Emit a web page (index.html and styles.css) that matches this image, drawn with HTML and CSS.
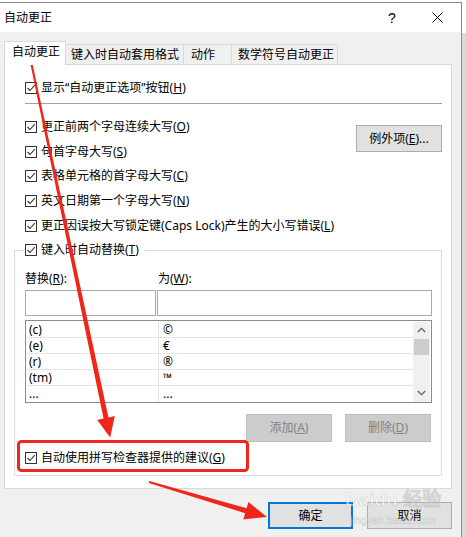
FILE: index.html
```html
<!DOCTYPE html>
<html lang="zh-CN">
<head>
<meta charset="utf-8">
<title>自动更正</title>
<link rel="stylesheet" href="styles.css">
</head>
<body>
<div class="window">
  <div class="titlebar">
    <span class="title">自动更正</span>
    <span class="help">?</span>
    <span class="close"><svg width="11" height="11" viewBox="0 0 11 11"><path d="M0.5 0.5L10.5 10.5M10.5 0.5L0.5 10.5" stroke="#000" stroke-width="1" fill="none"/></svg></span>
  </div>
  <div class="client">
    <div class="tabs">
      <div class="tab active">自动更正</div>
      <div class="tab t2">键入时自动套用格式</div>
      <div class="tab t3">动作</div>
      <div class="tab t4">数学符号自动更正</div>
    </div>
    <div class="panel">
      <div class="cb"><span class="box"><svg width="10" height="10" viewBox="0 0 10 10"><path d="M1.5 5L4 7.5L8.8 2.2" stroke="#333" stroke-width="1.1" fill="none"/></svg></span>显示“自动更正选项”按钮(<u>H</u>)</div>
      <div class="sep"></div>
      <div class="opts">
        <div class="optlist">
          <div class="cb"><span class="box"><svg width="10" height="10" viewBox="0 0 10 10"><path d="M1.5 5L4 7.5L8.8 2.2" stroke="#333" stroke-width="1.1" fill="none"/></svg></span>更正前两个字母连续大写(<u>O</u>)</div>
          <div class="cb"><span class="box"><svg width="10" height="10" viewBox="0 0 10 10"><path d="M1.5 5L4 7.5L8.8 2.2" stroke="#333" stroke-width="1.1" fill="none"/></svg></span>句首字母大写(<u>S</u>)</div>
          <div class="cb"><span class="box"><svg width="10" height="10" viewBox="0 0 10 10"><path d="M1.5 5L4 7.5L8.8 2.2" stroke="#333" stroke-width="1.1" fill="none"/></svg></span>表格单元格的首字母大写(<u>C</u>)</div>
          <div class="cb"><span class="box"><svg width="10" height="10" viewBox="0 0 10 10"><path d="M1.5 5L4 7.5L8.8 2.2" stroke="#333" stroke-width="1.1" fill="none"/></svg></span>英文日期第一个字母大写(<u>N</u>)</div>
          <div class="cb"><span class="box"><svg width="10" height="10" viewBox="0 0 10 10"><path d="M1.5 5L4 7.5L8.8 2.2" stroke="#333" stroke-width="1.1" fill="none"/></svg></span>更正因误按大写锁定键(Caps Lock)产生的大小写错误(<u>L</u>)</div>
        </div>
        <button class="btn exc">例外项(<u>E</u>)...</button>
      </div>
      <div class="group">
        <div class="cb legend"><span class="box"><svg width="10" height="10" viewBox="0 0 10 10"><path d="M1.5 5L4 7.5L8.8 2.2" stroke="#333" stroke-width="1.1" fill="none"/></svg></span>键入时自动替换(<u>T</u>)</div>
        <div class="fields">
          <span class="flabel">替换(<u>R</u>):</span>
          <span class="flabel right">为(<u>W</u>):</span>
          <div class="input left"></div>
          <div class="input"></div>
        </div>
        <div class="list">
          <div class="rows">
            <div class="row"><span class="c1">(c)</span><span class="c2">©</span></div>
            <div class="row"><span class="c1">(e)</span><span class="c2">€</span></div>
            <div class="row"><span class="c1">(r)</span><span class="c2">®</span></div>
            <div class="row"><span class="c1">(tm)</span><span class="c2">™</span></div>
            <div class="row last"><span class="c1">...</span><span class="c2">...</span></div>
          </div>
          <div class="vscroll">
            <span class="arrow"><svg width="9" height="6" viewBox="0 0 9 6"><path d="M0.8 5L4.5 1.3L8.2 5" stroke="#606060" stroke-width="1.3" fill="none"/></svg></span>
            <span class="thumb"></span>
            <span class="track"></span>
            <span class="arrow"><svg width="9" height="6" viewBox="0 0 9 6"><path d="M0.8 1L4.5 4.7L8.2 1" stroke="#606060" stroke-width="1.3" fill="none"/></svg></span>
          </div>
        </div>
        <div class="listbtns">
          <button class="btn dis" disabled>添加(<u>A</u>)</button>
          <button class="btn dis" disabled>删除(<u>D</u>)</button>
        </div>
        <div class="cb spell"><span class="box"><svg width="10" height="10" viewBox="0 0 10 10"><path d="M1.5 5L4 7.5L8.8 2.2" stroke="#333" stroke-width="1.1" fill="none"/></svg></span>自动使用拼写检查器提供的建议(<u>G</u>)</div>
      </div>
    </div>
    <div class="footer">
      <button class="btn ok">确定</button>
      <button class="btn cancel">取消</button>
    </div>
  </div>
</div>
<div class="watermark"><span class="wm-big">Baidu 经验</span><span class="wm-small">jingyan.baidu.com</span></div>
<svg class="annot" width="466" height="537" viewBox="0 0 466 537">
  <polygon fill="#f0261a" points="30.98,56.79 108.45,417.48 114.8,416.1 110.2,437.5 97.2,419.9 103.55,418.52 29.02,57.21"/>
  <polygon fill="#f0261a" points="148.72,482.96 245.19,513.15 243.34,519.38 267,517 248.46,502.12 246.61,508.35 149.28,481.04"/>
  <rect x="18.5" y="441.5" width="229" height="29" rx="3" ry="3" fill="none" stroke="#f0261a" stroke-width="3"/>
</svg>
</body>
</html>
```
FILE: styles.css
```css
* { box-sizing: border-box; }
html, body { margin: 0; padding: 0; }
body {
  width: 466px;
  height: 537px;
  overflow: hidden;
  position: relative;
  background: linear-gradient(#ffffff 0 33px, #dadada 33px);
  font-family: "Noto Sans", "Noto Sans CJK SC", sans-serif;
  font-size: 12px;
  color: #000;
}
u { text-decoration: underline; text-underline-offset: 1px; }

.window {
  width: 462px;
  height: 535px;
  margin-top: 2px;
  border-top: 1px solid #8a8a8a;
  border-right: 1px solid #8a8a8a;
  background: #f0f0f0;
  display: flex;
  flex-direction: column;
}
.titlebar {
  height: 29px;
  flex: none;
  background: #fff;
  display: flex;
  align-items: center;
  padding-left: 4px;
  padding-right: 18px;
}
.title { flex: 1; line-height: 16px; }
.help {
  width: 12px;
  margin-right: 34px;
  text-align: center;
  font-family: "Liberation Sans", sans-serif;
  font-size: 14px;
  line-height: 16px;
}
.close { width: 11px; height: 11px; display: flex; }

.client { flex: 1; display: flex; flex-direction: column; }

.tabs {
  margin-top: 9px;
  height: 24px;
  display: flex;
  align-items: flex-end;
  padding-left: 4px;
}
.tab {
  height: 21px;
  border: 1px solid #d9d9d9;
  border-bottom: none;
  border-left: none;
  background: #f0f0f0;
  line-height: 19px;
  white-space: nowrap;
}
.tab.active {
  position: relative;
  z-index: 1;
  height: 24px;
  width: 62px;
  border-left: 1px solid #d9d9d9;
  background: #fff;
  line-height: 20px;
  padding-left: 7px;
}
.tab.t2 { width: 118px; padding-left: 5px; }
.tab.t3 { width: 48px; padding-left: 7px; }
.tab.t4 { width: 106px; padding-left: 6px; }

.panel {
  margin-top: -1px;
  margin-left: 4px;
  width: 448px;
  height: 425px;
  flex: none;
  border: 1px solid #d9d9d9;
  background: #fff;
  padding: 11px 9px 0 20px;
  display: flex;
  flex-direction: column;
}

.cb {
  display: flex;
  align-items: center;
  height: 24px;
  white-space: nowrap;
  line-height: 16px;
  flex: none;
}
.box {
  width: 12px;
  height: 12px;
  flex: none;
  border: 1px solid #333;
  background: #fff;
  margin-right: 4px;
  display: flex;
  align-items: center;
  justify-content: center;
}

.sep { margin-top: 3px; height: 1px; background: #a0a0a0; flex: none; }

.opts {
  margin-top: 11px;
  display: flex;
  justify-content: space-between;
  align-items: flex-start;
}
.optlist { display: flex; flex-direction: column; }
.optlist .cb { height: 24.6px; }

.btn {
  font: inherit;
  color: #000;
  background: #e1e1e1;
  border: 1px solid #adadad;
  padding: 0;
  margin: 0;
  line-height: 16px;
  display: flex;
  align-items: center;
  justify-content: center;
}
.btn.exc { width: 86px; height: 27px; margin-top: 10px; }

.group {
  margin-top: 12px;
  margin-left: -11px;
  width: 428px;
  border: 1px solid #dcdcdc;
  padding: 0 9px 5px 10px;
  display: flex;
  flex-direction: column;
}
.legend {
  margin-top: -13px;
  margin-left: -2px;
  padding: 0 6px 0 2px;
  background: #fff;
  align-self: flex-start;
}

.fields {
  margin-top: 9px;
  display: grid;
  grid-template-columns: 132px 275px;
  row-gap: 3px;
}
.flabel { line-height: 16px; height: 16px; }
.flabel.right { padding-left: 1px; }
.input { height: 26px; border: 1px solid #a9a9a9; background: #fff; }
.input.left { width: 131px; }

.list {
  margin-top: 4px;
  width: 407px;
  height: 83px;
  border: 1px solid #8a8a8a;
  padding: 1px 1px 0 1px;
  display: flex;
}
.rows { flex: 1; display: flex; flex-direction: column; }
.row {
  height: 16px;
  display: grid;
  grid-template-columns: 132px 1fr;
  border-bottom: 1px solid #e3e3e3;
  line-height: 15px;
  overflow: hidden;
}
.row.last { border-bottom: none; }
.c1 { border-right: 1px solid #e3e3e3; padding-left: 2px; }
.c2 { padding-left: 4px; }

.vscroll {
  width: 17px;
  height: 80px;
  background: #f0f0f0;
  display: flex;
  flex-direction: column;
  align-items: center;
}
.arrow { height: 17px; flex: none; display: flex; align-items: center; justify-content: center; }
.thumb { width: 15px; height: 16px; background: #cdcdcd; flex: none; }
.track { flex: 1; }

.listbtns {
  margin-top: 11px;
  display: flex;
  justify-content: flex-end;
  gap: 13px;
  padding-right: 1px;
}
.btn.dis {
  width: 86px;
  height: 28px;
  background: #cccccc;
  border-color: #bfbfbf;
  color: #838383;
}
.spell { margin-top: 4px; }

.footer {
  margin-top: 13px;
  display: flex;
  justify-content: flex-end;
  gap: 14px;
  padding-right: 9px;
}
.footer .btn { width: 85px; height: 27px; }
.btn.ok { border: 2px solid #0078d7; }

.watermark {
  position: absolute;
  left: 347px;
  top: 489px;
  width: 92px;
  display: flex;
  flex-direction: column;
  align-items: center;
  font-family: "Liberation Sans", sans-serif;
  color: rgba(255, 255, 255, 0.5);
  -webkit-text-stroke: 0.5px rgba(150, 150, 150, 0.4);
  pointer-events: none;
}
.wm-big { font-size: 19px; font-weight: bold; line-height: 22px; white-space: nowrap; }
.wm-small { font-size: 10px; line-height: 12px; letter-spacing: 0.3px; margin-top: 4px; }

.annot { position: absolute; left: 0; top: 0; pointer-events: none; }
```
